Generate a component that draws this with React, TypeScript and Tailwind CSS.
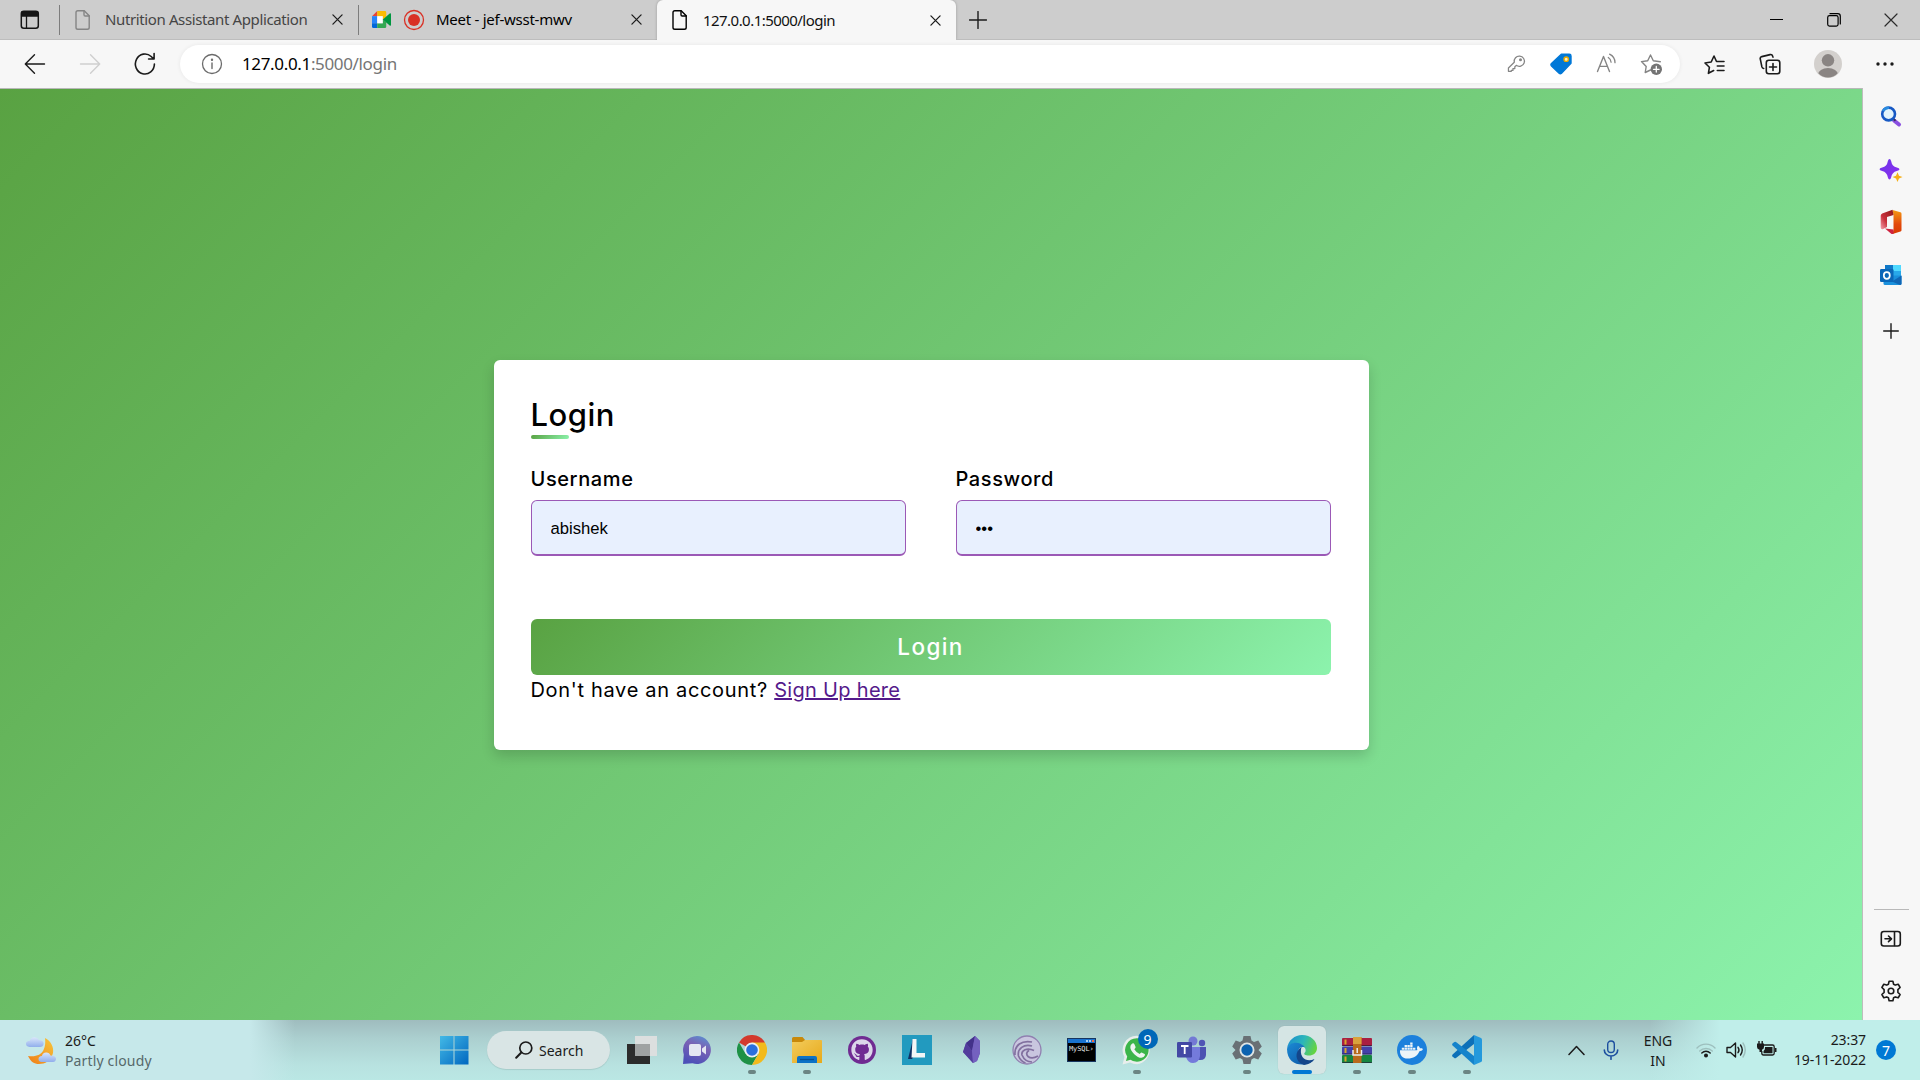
import type { ReactNode } from "react";
import { FaDocker, FaGithub } from "react-icons/fa";

function Icon({ size, box, children, className = "" }: { size: number; box?: number; children: ReactNode; className?: string }) {
  const b = box ?? size;
  return (
    <svg width={size} height={size} viewBox={`0 0 ${b} ${b}`} fill="none" stroke="currentColor" strokeWidth="1.4" strokeLinecap="round" strokeLinejoin="round" className={`shrink-0 ${className}`}>
      {children}
    </svg>
  );
}

/* ---------- Tab strip ---------- */

function PageIcon({ className }: { className: string }) {
  return (
    <Icon size={20} className={className}>
      <path d="M4.8 .8h6.400l5 5v11.600q0 1.800-1.800 1.800h-9.600q-1.800 0-1.800-1.800v-14.800q0-1.800 1.800-1.800z" />
      <path d="M11 1v3.800q0 1.200 1.200 1.200h4" />
    </Icon>
  );
}

function CloseIcon({ size = 11 }: { size?: number }) {
  return (
    <Icon size={size} box={12} className="text-[#1b1b1b]">
      <path d="M1 1l10 10M11 1L1 11" />
    </Icon>
  );
}

function TabStrip() {
  return (
    <div className="flex h-10 bg-[#cdcdcd]">
      <div className="flex flex-1 items-center border-b border-[#bdbdbd]">
        <div className="flex w-[59px] justify-center pt-px">
          <Icon size={20} className="text-[#161616]">
            <rect x="1.300" y="1.300" width="17" height="17" rx="2.500" strokeWidth="1.500" />
            <path d="M2 2h15.600v4H2z" fill="currentColor" />
            <path d="M6.500 6v12" strokeWidth="1.300" />
          </Icon>
        </div>
        <div className="h-[30px] w-px bg-[#7d7d7d]" />
        <div className="flex w-[298px] items-center pl-[13px]">
          <PageIcon className="text-[#858585]" />
          <span className="ml-[12px] w-[227px] text-[15px] tracking-[-0.38px] text-[#454545]">Nutrition Assistant Application</span>
          <CloseIcon />
        </div>
        <div className="h-[30px] w-px bg-[#7d7d7d]" />
        <div className="flex flex-1 items-center pl-[13px]">
          <Icon size={19} box={20}>
            <g stroke="none">
              <path d="M0 6.500L5.500 1v5.500z" fill="#ea4335" />
              <path d="M5.500 1h8q1.500 0 1.500 1.500v5l-3.700 2.500V6.500H5.500z" fill="#fbbc04" />
              <path d="M0 6.500h5.500v7.500H0z" fill="#2684fc" />
              <path d="M0 14h5.500v5H1.500Q0 19 0 17.500z" fill="#0066da" />
              <path d="M5.500 14h5.800v-4L15 13v4.500q0 1.500-1.500 1.500h-8z" fill="#34a853" />
              <path d="M5.500 6.500h5.800V14H5.500z" fill="#fff" />
              <path d="M11.300 10L15 6.800l3.600-3q1.400-.9 1.400.8v10.800q0 1.700-1.400.8L15 13.200z" fill="#00963f" />
            </g>
          </Icon>
          <Icon size={22} className="ml-3">
            <circle cx="11" cy="11" r="9.500" stroke="#d93025" strokeWidth="1.300" />
            <circle cx="11" cy="11" r="6" fill="#d93025" stroke="none" />
          </Icon>
          <span className="ml-[11px] w-[195px] text-[15px] tracking-[-0.26px] text-black">Meet - jef-wsst-mwv</span>
          <CloseIcon />
        </div>
      </div>
      <div className="flex w-[299px] items-center rounded-t-md bg-[#f7f7f7] pl-[13px] shadow-[0_0_3px_rgba(0,0,0,0.25)]">
        <PageIcon className="text-black" />
        <span className="ml-[13px] w-[227px] text-[15px] tracking-[-0.54px] text-[#111]">127.0.0.1:5000/login</span>
        <CloseIcon />
      </div>
      <div className="flex w-[964px] items-center justify-between border-b border-[#bdbdbd] pl-[13px] pr-[22px]">
        <Icon size={18} className="text-[#1b1b1b]">
          <path d="M9 .5v17M.5 9h17" />
        </Icon>
        <div className="flex items-center">
          <div className="h-px w-[13px] bg-black" />
          <Icon size={14} className="ml-[44px] text-black">
            <rect x=".7" y="2.700" width="10.400" height="10.400" rx="1.800" strokeWidth="1.200" />
            <path d="M3 .7h7.800q2.500 0 2.500 2.500V11" strokeWidth="1.200" />
          </Icon>
          <Icon size={14} className="ml-[43px] text-[#2b2b2b]">
            <path d="M1 1l12 12M13 1L1 13" strokeWidth="1.200" />
          </Icon>
        </div>
      </div>
    </div>
  );
}

/* ---------- Address bar ---------- */

function Toolbar() {
  return (
    <div className="flex h-12 items-center bg-[#f7f7f7]">
      <div className="flex w-[180px] items-center pl-[24px]">
        <Icon size={22} className="text-[#1b1b1b]">
          <path d="M20.500 11H1.500M10.500 1.800L1.300 11l9.200 9.200" />
        </Icon>
        <Icon size={22} className="ml-[33px] text-[#cfcfcf]">
          <path d="M1.500 11h19M11.500 1.800l9.200 9.200-9.200 9.200" />
        </Icon>
        <Icon size={24} className="ml-[32px] text-[#1b1b1b]">
          <path d="M21.400 12a9.500 10 0 1 1-3.200-7.500l2.400 2.300M21.100 1.500v5.500h-5.500" strokeWidth="1.600" />
        </Icon>
      </div>
      <div className="flex h-[38px] w-[1500px] items-center rounded-full bg-white pl-[21px] pr-[17px] shadow-[0_0_4px_rgba(0,0,0,0.07)]">
        <Icon size={22} className="text-[#6b6b6b]">
          <circle cx="11" cy="11" r="9.500" strokeWidth="1.300" />
          <path d="M11 10v5.500" />
          <circle cx="11" cy="6.800" r=".5" fill="currentColor" />
        </Icon>
        <span className="ml-[19px] flex-1 text-[17px] tracking-[-0.35px] text-[#757575]">
          <span className="text-black">127.0.0.1</span>:5000/login
        </span>
        <div className="flex items-center gap-[23px] text-[#858585]">
          <Icon size={22}>
            <path d="M10.300 12.600l-1.600 1.600v2H6.600v2H4.800v1h-3.200v-3.600l6.500-6.500a5.700 5.700 0 1 1 2.200 3.500z" transform="translate(2 1) scale(.9)" strokeWidth="1.400" />
            <circle cx="15.500" cy="6.800" r=".8" />
          </Icon>
          <Icon size={22}>
            <path d="M11.300 1.200h8q1.700 0 1.700 1.700v7.400L11.500 20.200q-1.200 1.200-2.400 0L1.500 13q-1.200-1.200 0-2.400z" fill="#0078d7" stroke="#0078d7" />
            <circle cx="16.200" cy="6.200" r="2.200" fill="#fff0c0" stroke="#e8a900" strokeWidth="1.400" />
          </Icon>
          <Icon size={22} className="translate-x-px">
            <path d="M1.500 18.500L7.500 3.500l6 15M3.700 13.400h7.600" />
            <path d="M12.300 4.500a6 6 0 0 1 2.800 4.700M13.600 1.200a9.500 9.500 0 0 1 5.400 8.500" strokeWidth="1.300" />
          </Icon>
          <Icon size={23}>
            <path d="M10.500 17l-5.300 2.500 1-6L1.500 8.600l6.200-.9L10.500 2l2.800 5.700 7 1" />
            <circle cx="16.300" cy="16.300" r="5.700" fill="#747474" stroke="none" />
            <path d="M16.300 13.500v5.600M13.500 16.300h5.600" stroke="#fff" strokeWidth="1.300" />
          </Icon>
        </div>
      </div>
      <div className="flex flex-1 items-center justify-between pl-[24px] pr-[26px] text-[#1b1b1b]">
        <Icon size={21}>
          <path d="M9.700 16.500l-5.300 2.800 1-6L1 9l6.200-1L10 2l2.500 5.500h7.500M13.300 12H20M13.300 16.500H20" strokeWidth="1.600" />
        </Icon>
        <Icon size={22}>
          <rect x="7.300" y="7.300" width="13.500" height="13.500" rx="2.500" strokeWidth="1.600" />
          <path d="M14 10.500v7M10.500 14h7" strokeWidth="1.600" />
          <path d="M4.700 15.500q-1.400-.2-1.800-1.600L1.300 6.200q-.5-2 1.500-2.600l8.300-2q2-.4 2.600 1.600l.3.900" strokeWidth="1.600" />
        </Icon>
        <svg width="28" height="28" viewBox="0 0 28 28">
          <defs>
            <clipPath id="avatar-clip"><circle cx="14" cy="14" r="13.500" /></clipPath>
          </defs>
          <circle cx="14" cy="14" r="14" fill="#d3d0cd" />
          <g fill="#8a8583" clipPath="url(#avatar-clip)">
            <circle cx="14" cy="10.300" r="6.200" />
            <ellipse cx="14" cy="24.500" rx="10" ry="6.500" />
          </g>
        </svg>
        <svg width="18" height="4" viewBox="0 0 18 4" fill="currentColor">
          <circle cx="2" cy="2" r="1.700" />
          <circle cx="9" cy="2" r="1.700" />
          <circle cx="16" cy="2" r="1.700" />
        </svg>
      </div>
    </div>
  );
}

/* ---------- Edge sidebar ---------- */

function Sidebar() {
  return (
    <aside className="flex w-[58px] flex-col items-center border-l border-[#bdbdbd] bg-[#f7f7f7] pr-px pt-[18px] text-[#1b1b1b]">
      <svg width="22" height="22" viewBox="0 0 22 22" fill="none">
        <path d="M14 14.500l5 4" stroke="#8a4fe0" strokeWidth="4" strokeLinecap="round" />
        <path d="M13 12.500l2.500 2.300" stroke="#37305c" strokeWidth="2" />
        <circle cx="8.600" cy="8" r="6.400" fill="#e3f4fc" stroke="#1759c4" strokeWidth="2.600" />
        <path d="M3 5a6.400 6.400 0 0 1 6-3.300" stroke="#2a8de0" strokeWidth="2.400" />
      </svg>
      <svg width="24" height="24" viewBox="0 0 24 24" className="mt-[30px]">
        <defs>
          <linearGradient id="discover" x1="0" y1="0" x2="1" y2="1"><stop stopColor="#6b35e8" /><stop offset="1" stopColor="#8e2ff0" /></linearGradient>
        </defs>
        <path d="M10.500 1q1.100 0 1.600 1.900 1 5.600 5.700 6.600 2.700.7 2.700 1.700t-2.700 1.700q-4.700 1-5.700 6.600-.5 1.900-1.600 1.900t-1.600-1.900q-1-5.600-5.700-6.600-2.700-.7-2.700-1.700t2.700-1.700q4.700-1 5.700-6.600.5-1.900 1.600-1.900z" fill="url(#discover)" />
        <path d="M18.500 14.300l1.500 3.400 3.500 1.300-3.500 1.400-1.500 3.500-1.500-3.500-3.400-1.400 3.400-1.300z" fill="#f6b01a" />
      </svg>
      <svg width="22" height="26" viewBox="0 0 22 26" className="mt-[27px]">
        <defs>
          <linearGradient id="office-r" x1="0" y1="0" x2="0" y2="1"><stop stopColor="#f49a13" /><stop offset=".6" stopColor="#e2480b" /><stop offset="1" stopColor="#d83b01" /></linearGradient>
          <linearGradient id="office-l" x1="1" y1="0" x2="0" y2="1"><stop stopColor="#8c1717" /><stop offset=".6" stopColor="#c9303c" /><stop offset="1" stopColor="#f4a0ad" /></linearGradient>
        </defs>
        <path d="M12.500 1l8 2.300q1 .3 1 1.500v16.500q0 1-1 1.300L12.500 25l1-4V6z" fill="url(#office-r)" />
        <path d="M12.500.8L13.500 6 7 8v10l-3.800 2q-2.500.8-2.500-1.700V6.800q0-1.500 1.500-2.300z" fill="url(#office-l)" />
        <path d="M5 19.500l8.500 1V25h-2z" fill="#cf2340" />
      </svg>
      <svg width="22" height="22" viewBox="0 0 22 22" className="mt-[29px]">
        <path d="M5 1h16v12H5z" fill="#28a8ea" />
        <path d="M13 1h8v6h-8z" fill="#50d9ff" />
        <path d="M5 1h8v6H5z" fill="#0f78c8" />
        <path d="M3.500 11.500h17q1 0 1 1v7q0 1.500-1.500 1.500H5q-1.500 0-1.500-1.500z" fill="#1a90dc" />
        <path d="M21.500 11.500L12 17.500l8 3.500q1.500 0 1.500-1.500z" fill="#1066b5" />
        <rect x="0" y="5" width="13.500" height="13" rx="1.300" fill="#0a66b8" />
        <ellipse cx="6.800" cy="11.500" rx="3" ry="3.300" fill="none" stroke="#fff" strokeWidth="1.700" />
      </svg>
      <Icon size={16} className="mt-[37px]">
        <path d="M8 .7v14.600M.7 8h14.600" />
      </Icon>
      <div className="mt-auto h-px w-[35px] bg-[#b9b9b9]" />
      <svg width="22" height="18" viewBox="0 0 22 18" fill="none" stroke="currentColor" strokeWidth="1.600" strokeLinecap="round" strokeLinejoin="round" className="mt-[20px]">
        <rect x="1.300" y="1.500" width="19" height="14.500" rx="2.500" />
        <path d="M14.500 2v13.500M5 8.800h6M8.500 6l3 2.800-3 2.800" />
      </svg>
      <Icon size={22} className="mb-[18px] mt-[32px]">
        <path d="M9.100 1.200h3.800l.7 3 1.700.9 2.900-.9 1.900 3.300-2.200 2.100v2.800l2.200 2.100-1.900 3.300-2.900-.9-1.700.9-.7 3H9.100l-.7-3-1.700-.9-2.900.9-1.900-3.300 2.200-2.100V9.600L1.900 7.500l1.900-3.300 2.900.9 1.700-.9z" strokeWidth="1.600" />
        <circle cx="11" cy="11" r="2.800" strokeWidth="1.600" />
      </Icon>
    </aside>
  );
}

/* ---------- Login page ---------- */

function Field({ label, type, value }: { label: string; type: string; value: string }) {
  return (
    <label className="flex w-[375px] flex-col">
      <span className="h-[42px] text-[20px] leading-[42px] font-medium tracking-[0.6px]">{label}</span>
      <input
        type={type}
        defaultValue={value}
        className="h-14 rounded-md border border-b-2 border-[#9b59b6] bg-[#e8f0fe] px-[19px] pt-[3px] font-['Liberation_Sans',Arial,sans-serif] text-[16.670px] text-black outline-none"
      />
    </label>
  );
}

function LoginPage() {
  return (
    <main className="flex flex-1 items-center justify-center border-t border-[#b8b8b8] bg-[linear-gradient(135deg,#59a242,#8cf3ad)]">
      <section className="h-[390px] w-[875px] rounded-md bg-white px-[37px] pt-[31px] font-[Inter,sans-serif] text-black shadow-[0_6px_13px_rgba(0,0,0,0.16)]">
        <h1 className="h-[44px] text-[31px] leading-[48px] font-[450] tracking-[0.5px]">Login</h1>
        <div className="h-1 w-[38px] rounded bg-[linear-gradient(135deg,#59a242,#8cf3ad)]" />
        <form className="mt-[19px]">
          <div className="flex justify-between pr-px">
            <Field label="Username" type="text" value="abishek" />
            <Field label="Password" type="password" value="abi" />
          </div>
          <button type="button" className="mt-[63px] h-14 w-[800px] rounded-md bg-[linear-gradient(135deg,#59a242,#8cf3ad)] text-[22.500px] font-medium tracking-[1.400px] text-white">
            Login
          </button>
          <p className="text-[20px] leading-[30px] tracking-[0.68px]">
            Don't have an account?{" "}
            <a href="#signup" className="tracking-[0.3px] text-[#551a8b] underline decoration-2">Sign Up here</a>
          </p>
        </form>
      </section>
    </main>
  );
}

/* ---------- Taskbar ---------- */

function TaskbarApp({ children, running, active }: { children: ReactNode; running?: boolean; active?: boolean }) {
  return (
    <div className="flex w-[55px] justify-center">
      <div className={active ? "flex h-12 w-12 flex-col items-center rounded-md bg-[#d5e5e4] pt-[9px] shadow-[0_0_1px_rgba(0,0,0,0.2)]" : "flex h-12 w-12 flex-col items-center pt-[9px]"}>
        <div className="flex h-[30px] w-full items-center justify-center">{children}</div>
        {running && <div className={active ? "mt-[5px] h-1 w-5 rounded-full bg-[#0078d4]" : "mt-[5px] h-1 w-2 rounded-full bg-[#6b8583]"} />}
      </div>
    </div>
  );
}

function TaskbarApps() {
  return (
    <>
      <TaskbarApp>
        <svg width="30" height="28" viewBox="0 0 30 28">
          <path d="M0 8h23v20H0z" fill="#2c2c2c" />
          <path d="M8 0h22v20H8z" fill="#dcdfdf" />
          <path d="M8 8h15v12H8z" fill="#9fa2a2" />
        </svg>
      </TaskbarApp>
      <TaskbarApp>
        <svg width="30" height="30" viewBox="0 0 30 30">
          <defs><linearGradient id="chat" x1=".8" y1="0" x2=".4" y2="1"><stop stopColor="#5b8fd0" /><stop offset=".4" stopColor="#7a62b5" /><stop offset="1" stopColor="#4d50b8" /></linearGradient></defs>
          <path d="M15 1a14 14 0 1 1-4.500 27.300L1 29l.8-9.500A14 14 0 0 1 15 1z" fill="url(#chat)" />
          <rect x="7" y="9" width="12" height="12" rx="2" fill="#e4e6f2" />
          <path d="M20 13.500l4-3v9l-4-3z" fill="#e4e6f2" />
        </svg>
      </TaskbarApp>
      <TaskbarApp running>
        <svg width="30" height="30" viewBox="0 0 30 30">
          <path d="M15 15L2 7.500A15 15 0 0 1 28 7.500z" fill="#d33a2d" />
          <path d="M15 15L8.500 18.700 2 7.500A15 15 0 0 0 15 30l6.500-11.200z" fill="#1e9146" />
          <path d="M15 7.500h13a15 15 0 0 1-13 22.500l6.500-11.200z" fill="#f2ba1c" />
          <circle cx="15" cy="15" r="7.400" fill="#edf1f2" />
          <circle cx="15" cy="15" r="5.800" fill="#2b6fdd" />
        </svg>
      </TaskbarApp>
      <TaskbarApp running>
        <svg width="30" height="28" viewBox="0 0 30 28">
          <defs><linearGradient id="folder" x1="0" y1="0" x2="1" y2="1"><stop stopColor="#f3cc5c" /><stop offset="1" stopColor="#e7a91a" /></linearGradient></defs>
          <path d="M0 2.500Q0 1 1.500 1h9l3 3.500H28q2 0 2 2V27H0z" fill="#c8890b" />
          <path d="M0 6h10l3-2h16q1 0 1 1v22H0z" fill="url(#folder)" />
          <path d="M5 27v-5q0-2 2-2h16q2 0 2 2v5z" fill="#0c72c6" />
          <path d="M8 23.500h14" stroke="#064f91" strokeWidth="1.300" />
        </svg>
      </TaskbarApp>
      <TaskbarApp>
        <div className="flex h-7 w-7 items-center justify-center rounded-full bg-[#702b92]">
          <FaGithub size={22} color="#dcd6ea" />
        </div>
      </TaskbarApp>
      <TaskbarApp>
        <svg width="30" height="30" viewBox="0 0 30 30">
          <path d="M0 0h30v30H0z" fill="#229abf" />
          <path d="M11 4L6 24h4l2-3z" fill="#102f63" />
          <path d="M10.500 4h4v14H23v4.500H9.500z" fill="#f2f5f6" />
        </svg>
      </TaskbarApp>
      <TaskbarApp>
        <svg width="20" height="30" viewBox="0 0 20 30">
          <path d="M13 1L4 8 1 17l10 11 4-2 3-8V6z" fill="#6650b0" />
          <path d="M13 1L4 8l6 8z" fill="#43318a" />
          <path d="M4 8l-3 9 10 11-1-12z" fill="#523d9c" />
          <path d="M13 1l5 5v12l-3 8-4 2-1-12z" fill="#7461bf" />
        </svg>
      </TaskbarApp>
      <TaskbarApp>
        <svg width="30" height="30" viewBox="0 0 30 30" fill="none" stroke="#81709f" strokeWidth="1.700">
          <circle cx="15" cy="15" r="14" fill="#c9c6df" stroke="#9080b0" strokeWidth="1.300" />
          <path d="M20 7C10 5 2 10 3 20M20 11C12 8.500 5 14 6.500 21q2 5 7 7M22 15.500C15 12 9 15.500 10 20q3 7 10 7M26 21q-6 3.500-10 .5-3-3.500 1-6" />
        </svg>
      </TaskbarApp>
      <TaskbarApp>
        <div className="flex h-6 w-[29px] flex-col border border-[#17355f] bg-black">
          <div className="flex h-1 justify-end gap-px bg-[#1972cf] pr-px pt-px">
            <div className="h-0.5 w-0.5 bg-[#a9cff2]" />
            <div className="h-0.5 w-0.5 bg-[#a9cff2]" />
            <div className="h-0.5 w-0.5 bg-[#ee6b45]" />
          </div>
          <span className="mt-[2px] pl-px font-['DejaVu_Sans_Mono',monospace] text-[7px] leading-[8px] tracking-[-0.1px] text-[#e5e5e5]">MySQL›</span>
        </div>
      </TaskbarApp>
      <TaskbarApp running>
        <div className="relative">
          <svg width="30" height="30" viewBox="0 0 30 30">
            <path d="M15 .8A14.300 14.300 0 0 1 15 29.200q-3.700 0-7-1.800L.5 29.500l2-7.500A14.200 14.200 0 0 1 15 .8z" fill="#e8eeec" />
            <path d="M15 3.300a11.700 11.700 0 1 1-6.500 21.500L4 26l1.200-4.400A11.700 11.700 0 0 1 15 3.300z" fill="#3cb54a" />
            <path d="M10.300 8.500q1.300-.8 2 .4l1.300 3q.2.800-1.300 2.400 1.800 3.200 5.300 4.700 1.300-1.800 2-1.600l3 1.500q.7.400.2 1.700-.8 2-3.300 2.200-3.300.1-7.200-3.600-4-4-4-7.300 0-2.300 2-3.400z" fill="#eef4f1" />
          </svg>
          <span className="absolute -top-[6px] left-[16px] flex h-5 w-5 items-center justify-center rounded-full bg-[#0067b8] text-[14px] text-white">9</span>
        </div>
      </TaskbarApp>
      <TaskbarApp>
        <svg width="30" height="28" viewBox="0 0 30 28">
          <circle cx="25" cy="7" r="3.200" fill="#5055b5" />
          <circle cx="16" cy="5" r="4.500" fill="#7379d4" />
          <path d="M21 11h8v8q-.5 5-5.500 5H21z" fill="#4d52b2" />
          <path d="M9 11h14v9q-1 7-7 7-5 0-7-6z" fill="#747adb" />
          <rect x="0" y="6" width="15" height="15.500" rx="1.300" fill="#4348a5" />
          <path d="M4 10h7.500M7.700 10v8" stroke="#fff" strokeWidth="1.800" />
        </svg>
      </TaskbarApp>
      <TaskbarApp running>
        <svg width="30" height="30" viewBox="0 0 30 30">
          <path d="M11.500 1h7l1 4.500 2.500 1.400 4.300-1.400 3.500 6-3.300 3.500 3.300 3.500-3.500 6-4.300-1.400-2.500 1.400-1 4.500h-7l-1-4.500L8 23.100l-4.300 1.400-3.500-6L3.500 15 .2 11.500l3.500-6L8 6.900l2.500-1.400z" fill="#697075" />
          <circle cx="15" cy="15" r="7.500" fill="#dfe5e6" />
          <circle cx="15" cy="15" r="5.700" fill="#0c62b0" />
        </svg>
      </TaskbarApp>
      <TaskbarApp running active>
        <svg width="30" height="30" viewBox="0 0 30 30">
          <defs>
            <linearGradient id="edge-top" x1="0" y1=".3" x2="1" y2=".6"><stop stopColor="#1b8fce" /><stop offset=".5" stopColor="#2cb6ba" /><stop offset="1" stopColor="#67d53c" /></linearGradient>
            <linearGradient id="edge-low" x1="0" y1="0" x2="1" y2="1"><stop stopColor="#1b8ad4" /><stop offset="1" stopColor="#0b51a0" /></linearGradient>
          </defs>
          <path d="M0 14C1 5 8 0 15 0c9 0 15 6 15 13 0 5-4 7.500-8 7.500-4 0-5.500-1.500-4.500-2.500q2-2 .5-5C14 7 3 7 0 14z" fill="url(#edge-top)" />
          <path d="M0 14C2 6 14 6 18 12.500 11 10 10 18 12 22c3 6 10 6 15.500 2.200C20 33 0 32 0 14z" fill="url(#edge-low)" />
          <path d="M14.500 12C7 17 8 27 17 30c5-.5 8.500-3 10.500-6-4 2-9 2-12-2-2-3-2-6.500-1-10z" fill="#14468a" />
        </svg>
      </TaskbarApp>
      <TaskbarApp running>
        <svg width="30" height="26" viewBox="0 0 30 26">
          <rect x="0" y="1" width="30" height="8" rx="1" fill="#a91f41" />
          <rect x="0" y="9.500" width="30" height="8" rx="1" fill="#4340a8" />
          <rect x="0" y="18" width="30" height="8" rx="1" fill="#168540" />
          <path d="M2.500 5h2M2.500 13.500h2M2.500 22h2" stroke="#d9a52b" strokeWidth="5" />
          <path d="M0 8.500h30M0 17h30M0 25.500h30" stroke="#1d1733" opacity=".6" />
          <path d="M11 0h8.500v26H11z" fill="#b86a1d" />
          <path d="M11 0h8.500v7H11z" fill="#d9a23d" />
          <path d="M11 13v5h8.500v-5" fill="none" stroke="#ececec" strokeWidth="1.500" />
          <path d="M15.200 11v5" stroke="#ececec" strokeWidth="1.500" />
        </svg>
      </TaskbarApp>
      <TaskbarApp running>
        <div className="flex h-[30px] w-[30px] items-center justify-center rounded-full bg-[#1c80dc]">
          <FaDocker size={23} color="#eef4f8" />
        </div>
      </TaskbarApp>
      <TaskbarApp running>
        <svg width="30" height="30" viewBox="0 0 30 30">
          <path d="M22 0v9L4 23q-1 .7-2-.2L.5 21.400q-.8-.9.100-1.800z" fill="#0d70b8" />
          <path d="M22 30v-9L4 7q-1-.7-2 .2L.5 8.600q-.8.900.1 1.800z" fill="#1583cb" />
          <path d="M22 0l7 3q1 .5 1 1.500v21q0 1-1 1.500l-7 3z" fill="#2499dc" />
        </svg>
      </TaskbarApp>
    </>
  );
}

function Taskbar() {
  return (
    <footer className="flex h-[60px] items-center bg-[linear-gradient(90deg,#c6e8ea_0px,#c6e8ea_250px,transparent_295px,transparent_1650px,#c0eeea_1720px),linear-gradient(180deg,#9fbcbe_0%,#abcfcf_30%,#b8e2e0_75%,#bae7e4_100%)] text-[#1b1b1b]">
      <div className="flex w-[439px] items-center gap-[9px] pl-[26px]">
        <svg width="30" height="30" viewBox="0 0 30 30">
          <defs>
            <linearGradient id="moon" x1="1" y1="0" x2="0" y2="1"><stop stopColor="#f7c63b" /><stop offset="1" stopColor="#ef7d18" /></linearGradient>
            <linearGradient id="cloud" x1="0" y1="0" x2="0" y2="1"><stop stopColor="#d9e5fa" /><stop offset="1" stopColor="#91aeec" /></linearGradient>
          </defs>
          <path d="M19 3c6 3 9 9 8 15-2 8-8 11-14 11-5 0-8-2-11-8 8 1 13-1 15.500-6 2-4 2-8 1.500-12z" fill="url(#moon)" />
          <path d="M3.500 12q-3.500-.5-3.500-3.200t3.800-3A5 5 0 0 1 13 5q5 .5 4.600 4-.4 3-3.600 3z" fill="url(#cloud)" />
          <path d="M15.500 27q-3-.4-3-3t3.400-3a4.500 4.500 0 0 1 8.600-.5q5.500 0 5.500 3.500-.4 3-3 3z" fill="url(#cloud)" />
        </svg>
        <div className="flex flex-col pt-px text-[14px] leading-5">
          <span>26°C</span>
          <span className="tracking-[0.15px] text-[#56696a]">Partly cloudy</span>
        </div>
      </div>
      <svg width="30" height="30" viewBox="0 0 30 30">
        <defs><linearGradient id="win" x1="0" y1="0" x2="1" y2="1"><stop stopColor="#43b9e6" /><stop offset="1" stopColor="#0067c0" /></linearGradient></defs>
        <path d="M1 1h13.500v13.500H1zM15.500 1H29.500v13.500H15.500zM1 15.500h13.500V29.500H1zM15.500 15.500H29.500V29.500H15.500z" fill="url(#win)" />
      </svg>
      <div className="ml-[18px] mr-[4px] flex h-[38px] w-[123px] items-center rounded-full bg-[#d9e5e5] pl-[28px] shadow-[0_1px_1px_rgba(0,0,0,0.1)]">
        <Icon size={18}>
          <circle cx="10.800" cy="7" r="6" strokeWidth="1.700" />
          <path d="M6.300 11.500L1.200 16.800" strokeWidth="2" />
        </Icon>
        <span className="ml-[6px] text-[14px]">Search</span>
      </div>
      <div className="flex">
        <TaskbarApps />
      </div>
      <div className="ml-[74px] flex flex-1 items-center">
        <Icon size={17}>
          <path d="M1 12.500l7.500-8 7.500 8" strokeWidth="1.500" />
        </Icon>
        <Icon size={20} className="ml-[16px] text-[#1d4f9f]">
          <rect x="6.700" y="1" width="6.600" height="11.500" rx="3.300" />
          <path d="M3.300 10a6.700 6 0 0 0 13.400 0M10 16v3.300" strokeWidth="1.600" />
        </Icon>
        <div className="ml-[7px] flex w-[60px] flex-col pt-px text-center text-[14px] leading-5">
          <span>ENG</span>
          <span>IN</span>
        </div>
        <Icon size={20} className="ml-[8px]">
          <path d="M1 8a12.500 12.500 0 0 1 18 0M3.700 11a9 9 0 0 1 12.600 0" stroke="#9dbfbd" />
          <path d="M5.800 13a6 6 0 0 1 8.400 0" />
          <circle cx="10" cy="15.500" r="1.300" fill="currentColor" />
        </Icon>
        <Icon size={20} className="ml-[10px]">
          <path d="M1 7.500h3.500l5-4.500v14l-5-4.500H1z" />
          <path d="M12 7.300q2 2.700 0 5.400M14.500 5q3.500 5 0 10" />
          <path d="M17 3q4.500 7 0 14" stroke="#9dbfbd" />
        </Icon>
        <svg width="20" height="20" viewBox="0 0 20 20" className="ml-[11px]" fill="currentColor">
          <path d="M7 5h8.500q1.700 0 1.700 1.700v6.600q0 1.700-1.700 1.700h-9q-1.700 0-1.700-1.700V11" fill="none" stroke="currentColor" strokeWidth="1.300" />
          <path d="M8 7h7.500v6.300h-9V11Q8 10 8 8zM18 8h1.500v4H18zM0 3.500h7V7q0 2-2 2.700V12H2.500V9.700Q0 9 0 7zM1.300 1h1.400v3H1.300zM4.500 1h1.400v3H4.500z" />
        </svg>
        <div className="ml-[10px] flex w-[79px] flex-col whitespace-nowrap text-right text-[14px] leading-5 tracking-[-0.1px]">
          <span>23:37</span>
          <span>19-11-2022</span>
        </div>
        <div className="ml-[10px] flex h-5 w-5 items-center justify-center rounded-full bg-[#0078d4] text-[14px] text-white">7</div>
      </div>
    </footer>
  );
}

export default function App() {
  return (
    <div className="flex h-[1080px] w-[1920px] flex-col overflow-hidden bg-[#f7f7f7] font-['Noto_Sans',sans-serif]">
      <TabStrip />
      <Toolbar />
      <div className="flex flex-1">
        <LoginPage />
        <Sidebar />
      </div>
      <Taskbar />
    </div>
  );
}
